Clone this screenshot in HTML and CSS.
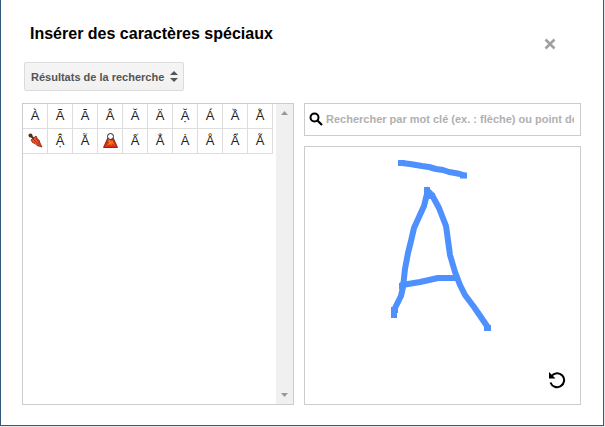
FILE: index.html
```html
<!DOCTYPE html>
<html lang="fr">
<head>
  <meta charset="utf-8">
  <title>Insérer des caractères spéciaux</title>
  <link rel="stylesheet" href="styles.css">
</head>
<body>

  <div class="dialog" role="dialog" aria-labelledby="title">
    <div class="header">
      <h1 id="title">Insérer des caractères spéciaux</h1>
      <button class="close" type="button" aria-label="Fermer">
        <svg width="12" height="12" viewBox="0 0 12 12"><path d="M1.500 1.500L10.500 10.500M10.500 1.500L1.500 10.500" stroke="#a0a0a0" stroke-width="2.600"/></svg>
      </button>
    </div>

    <div class="category">
      <select aria-label="Catégorie">
        <option>Résultats de la recherche</option>
      </select>
      <svg class="arrows" width="8" height="12" viewBox="0 0 8 12"><path d="M0 5L4 1L8 5ZM0 8H8L4 12Z" fill="#555"/></svg>
    </div>

    <div class="content">
      <div class="results">
        <div class="grid">
          <button type="button">À</button>
          <button type="button">Ã</button>
          <button type="button">Ā</button>
          <button type="button">Â</button>
          <button type="button">Ă</button>
          <button type="button">Ä</button>
          <button type="button">Ặ</button>
          <button type="button">Á</button>
          <button type="button">Ầ</button>
          <button type="button">Ằ</button>
          <button type="button" aria-label="Parapluie fermé">
            <svg width="15" height="15" viewBox="0 0 15 15">
              <path d="M3 7L8 3L9.500 6L11 7L12 10L14 14L9 12.500L7 10.500L4.500 9.500Z" fill="#ee4f2a" stroke="#6b2413" stroke-width=".8"/>
              <path d="M5 6L12.500 13M8 5L12 11" stroke="#c22d12" fill="none"/>
              <circle cx="2.500" cy="2.500" r="2" fill="#4a3413"/>
              <path d="M3 3L5.500 5.500" stroke="#4a3413" stroke-width="2"/>
            </svg>
          </button>
          <button type="button">Ậ</button>
          <button type="button">Ẫ</button>
          <button type="button" aria-label="Volcan">
            <svg width="15" height="15" viewBox="0 0 15 15">
              <path d="M4.500 5.500H10.500L14.500 14.500H0.500Z" fill="#dc2d16" stroke="#5a1a0c" stroke-width=".8"/>
              <path d="M5 6L6 10L3 13L7 11L8 13L9 10L12 13L9 7L8 9L7 6Z" fill="#fa7a20"/>
              <circle cx="7.500" cy="3.500" r="3" fill="#fff" stroke="#222"/>
            </svg>
          </button>
          <button type="button">Ấ</button>
          <button type="button">Ẳ</button>
          <button type="button">Ȧ</button>
          <button type="button">Å</button>
          <button type="button">Ẩ</button>
          <button type="button">Ẵ</button>
        </div>
        <div class="scrollbar">
          <svg width="7" height="4" viewBox="0 0 7 4"><path d="M0 4L3.500 0L7 4Z" fill="#999"/></svg>
          <svg width="7" height="4" viewBox="0 0 7 4"><path d="M0 0H7L3.500 4Z" fill="#999"/></svg>
        </div>
      </div>

      <div class="side">
        <label class="search">
          <svg width="14" height="14" viewBox="0 0 14 14"><circle cx="5.500" cy="5.500" r="4" fill="none" stroke="#000" stroke-width="2"/><path d="M8.500 8.500L13 13" stroke="#000" stroke-width="2.200"/></svg>
          <input type="text" aria-label="Rechercher" placeholder="Rechercher par mot clé (ex. : flèche) ou point de code">
        </label>
        <div class="drawing">
          <svg class="strokes" width="120" height="190" viewBox="0 0 120 190" fill="none" stroke="#4d90fe" stroke-width="6" stroke-linejoin="round">
            <g stroke-linecap="round">
              <path d="M22 16L30 17L42 19L49 20L56 22L63 23L69 25L75 26L80 27L83 28"/>
              <path d="M47 43V47L44 59L39 70L34 81L31 94L28 106L25 122L23 140L21 149L14 163"/>
              <path d="M47 43L52 48L59 61L66 79L67 86L70 108L75 125L80 138L85 148L94 160L107 179"/>
              <path d="M22 138L40 135L58 131H77"/>
            </g>
            <path d="M18 16H25M80 28.500H87M44 43H50M48 49H55M11 163H18M11 168H17M104 181H111M19 139H24"/>
          </svg>
          <button class="undo" type="button" aria-label="Effacer">
            <svg width="18" height="18" viewBox="0 0 18 18"><path d="M3.500 5A7 7 0 1 1 2.500 11.500" fill="none" stroke="#000" stroke-width="2"/><path d="M1 1V7.500H7.500Z" fill="#000"/></svg>
          </button>
        </div>
      </div>
    </div>
  </div>

</body>
</html>
```

FILE: styles.css
```css
* {
  box-sizing: border-box;
}

body {
  margin: 0;
  min-height: 100vh;
  padding: 0 1px 1px 0;
  display: flex;
  background: #e4e8ec;
  font-family: "Liberation Sans", Arial, sans-serif;
}

button {
  padding: 0;
  border: none;
  background: none;
  cursor: pointer;
}

svg {
  display: block;
}

.dialog {
  flex: 1;
  display: flex;
  flex-direction: column;
  padding: 24px 22px 20px 21px;
  border: 1px solid #34597d;
  border-top: none;
  background: #fff;
}

.header {
  display: flex;
  justify-content: space-between;
  padding: 0 25px 0 8px;
  height: 38px;
}

h1 {
  margin: 0;
  font-size: 16px;
  line-height: 20px;
  color: #000;
}

.close {
  align-self: flex-start;
  margin-top: 14px;
}

.category {
  position: relative;
  align-self: flex-start;
  margin: 0 0 12px 2px;
}

.category select {
  appearance: none;
  display: block;
  height: 29px;
  padding: 0 18px 0 6px;
  border: 1px solid #dcdcdc;
  border-radius: 2px;
  background: linear-gradient(#f5f5f5, #f1f1f1);
  color: #555;
  font: bold 11px "Liberation Sans", Arial, sans-serif;
}

.arrows {
  position: absolute;
  top: 8px;
  right: 6px;
  pointer-events: none;
}

.content {
  flex: 1;
  display: grid;
  grid-template-columns: 272fr 277fr;
  gap: 10px;
}

.results {
  display: flex;
  justify-content: space-between;
  border: 1px solid #ccc;
}

.grid {
  display: grid;
  grid-template-columns: repeat(10, 25px);
  grid-auto-rows: 25px;
  align-content: start;
}

.grid button {
  display: flex;
  align-items: center;
  justify-content: center;
  padding-bottom: 2px;
  border-right: 1px solid #ddd;
  border-bottom: 1px solid #ddd;
  color: #222;
  font: 13px "Liberation Sans", Arial, sans-serif;
}

.scrollbar {
  width: 17px;
  display: flex;
  flex-direction: column;
  align-items: center;
  justify-content: space-between;
  padding: 7px 0;
  background: #f0f0f0;
}

.side {
  min-width: 0;
  display: flex;
  flex-direction: column;
  gap: 10px;
}

.search {
  display: flex;
  align-items: center;
  gap: 3px;
  height: 33px;
  padding: 0 6px 2px 4px;
  border: 1px solid #ccc;
}

.search svg {
  flex: none;
}

.search input {
  flex: 1;
  min-width: 0;
  padding: 0;
  border: none;
  outline: none;
  font: bold 11px "Liberation Sans", Arial, sans-serif;
}

.search input::placeholder {
  color: #b0b0b0;
}

.drawing {
  flex: 1;
  display: flex;
  justify-content: space-between;
  align-items: flex-end;
  padding: 0 14px 15px 75px;
  border: 1px solid #ccc;
}

.strokes {
  align-self: flex-start;
}
```
